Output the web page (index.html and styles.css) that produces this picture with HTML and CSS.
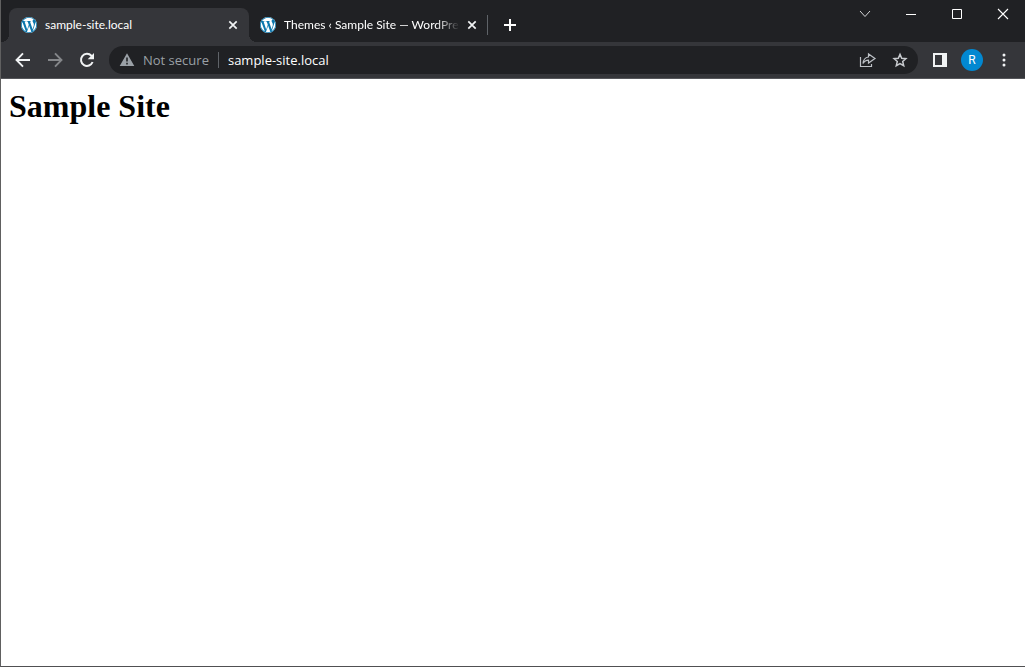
FILE: index.html
```html
<!DOCTYPE html>
<html lang="en">
<head>
<meta charset="utf-8">
<title>Sample Site</title>
<link rel="stylesheet" href="styles.css">
</head>
<body>
<svg class="defs" width="0" height="0" aria-hidden="true">
  <symbol id="wp" viewBox="0 0 24 24">
    <circle cx="12" cy="12" r="12" fill="#fff"/>
    <path fill="#0b77ad" d="M21.469 6.825c.84 1.537 1.318 3.3 1.318 5.175 0 3.979-2.156 7.456-5.363 9.325l3.295-9.527c.615-1.54.82-2.771.82-3.864 0-.405-.026-.78-.07-1.11m-7.981.105c.647-.03 1.232-.105 1.232-.105.582-.075.514-.93-.067-.899 0 0-1.755.135-2.88.135-1.064 0-2.85-.15-2.85-.15-.585-.03-.661.855-.075.885 0 0 .54.061 1.125.09l1.68 4.605-2.37 7.08L5.354 6.9c.649-.03 1.234-.1 1.234-.1.585-.075.516-.93-.065-.896 0 0-1.746.138-2.874.138-.2 0-.438-.008-.69-.015C4.911 3.15 8.235 1.215 12 1.215c2.809 0 5.365 1.072 7.286 2.833-.046-.003-.091-.009-.141-.009-1.06 0-1.812.923-1.812 1.914 0 .89.513 1.643 1.06 2.531.411.72.89 1.643.89 2.977 0 .915-.354 1.994-.821 3.479l-1.075 3.585-3.9-11.61.001.014zM12 22.784c-1.059 0-2.081-.153-3.048-.437l3.237-9.406 3.315 9.087c.024.053.05.101.078.149-1.12.393-2.325.609-3.582.609M1.211 12c0-1.564.336-3.05.935-4.39L7.29 21.709C3.694 19.96 1.212 16.271 1.211 12M12 0C5.385 0 0 5.385 0 12s5.385 12 12 12 12-5.385 12-12S18.615 0 12 0"/>
  </symbol>
  <symbol id="close" viewBox="0 0 16 16">
    <path d="M4.3 4.3l7.4 7.4M11.7 4.3l-7.4 7.4" fill="none" stroke="#f1f3f4" stroke-width="1.7"/>
  </symbol>
</svg>
<div class="window">
  <header class="tabstrip">
    <div class="tab tab-active">
      <svg class="favicon" aria-hidden="true"><use href="#wp"/></svg>
      <span class="tab-title">sample-site.local</span>
      <button class="tab-close" aria-label="Close tab"><svg width="16" height="16"><use href="#close"/></svg></button>
    </div>
    <div class="tab">
      <svg class="favicon" aria-hidden="true"><use href="#wp"/></svg>
      <span class="tab-title tab-title-fade">Themes ‹ Sample Site — WordPre</span>
      <button class="tab-close" aria-label="Close tab"><svg width="16" height="16"><use href="#close"/></svg></button>
    </div>
    <button class="new-tab" aria-label="New tab"><svg width="16" height="16" viewBox="0 0 16 16"><path d="M8 2v12M2 8h12" stroke="#fff" stroke-width="2"/></svg></button>
    <div class="caption">
      <button class="caption-button" aria-label="Search tabs"><svg width="12" height="12" viewBox="0 0 12 12"><path d="M1 3l5 5.500 5-5.500" fill="none" stroke="#d5d6d8"/></svg></button>
      <button class="caption-button" aria-label="Minimize"><svg width="12" height="12" viewBox="0 0 12 12"><path d="M1 6.500h10" stroke="#fff"/></svg></button>
      <button class="caption-button" aria-label="Maximize"><svg width="12" height="12" viewBox="0 0 12 12"><path d="M1.500 1.500h9v9h-9z" fill="none" stroke="#fff"/></svg></button>
      <button class="caption-button" aria-label="Close"><svg width="12" height="12" viewBox="0 0 12 12"><path d="M1 1l10 10M11 1L1 11" stroke="#fff" stroke-width="1.100"/></svg></button>
    </div>
  </header>
  <nav class="toolbar" aria-label="Navigation">
    <div class="nav-buttons">
      <button class="icon-button" aria-label="Back"><svg width="16" height="16" viewBox="0 0 16 16"><path d="M15 8H2M8 1.300L1.500 8 8 14.700" fill="none" stroke="#f1f3f4" stroke-width="1.900"/></svg></button>
      <button class="icon-button" aria-label="Forward"><svg width="16" height="16" viewBox="0 0 16 16"><path d="M1 8h13M8 1.300L14.500 8 8 14.700" fill="none" stroke="#85878a" stroke-width="1.900"/></svg></button>
      <button class="icon-button" aria-label="Reload"><svg width="16" height="16" viewBox="0 0 16 16"><path d="M13.600 10A6 6 0 1 1 12.400 3.800L14 5.400" fill="none" stroke="#f1f3f4" stroke-width="2"/><path d="M15 1v6.300H8.700z" fill="#f1f3f4"/></svg></button>
    </div>
    <div class="omnibox">
      <svg class="warning" width="16" height="16" viewBox="0 0 16 16" aria-hidden="true"><path fill="#9aa0a6" fill-rule="evenodd" d="M8 1.300L15.300 14H.7zM7.200 5.500v4h1.600v-4zM7.200 10.800v1.600h1.600v-1.600z"/></svg>
      <span class="security">Not secure</span>
      <input class="address" type="text" aria-label="Address" value="sample-site.local">
      <button class="icon-button" aria-label="Share"><svg width="18" height="16" viewBox="0 0 18 16"><path d="M1.500 5v9.500h11V12M9.500 5V2l6.500 4.500L9.500 11V8.200C7 8.200 5.300 9.200 4 11.500 4.300 8 6 5.500 9.500 5z" fill="none" stroke="#bdc1c6" stroke-width="1.200"/></svg></button>
      <button class="icon-button" aria-label="Bookmark"><svg width="16" height="16" viewBox="0 0 16 16"><path d="M8 2.400l1.700 3.900 4.200.4-3.200 2.800 1 4.200L8 11.500l-3.700 2.200 1-4.200-3.200-2.800 4.200-.4z" fill="none" stroke="#c8cbcf" stroke-width="1.500"/></svg></button>
    </div>
    <div class="tool-buttons">
      <button class="icon-button" aria-label="Side panel"><svg width="14" height="14" viewBox="0 0 14 14"><path fill="#f1f3f4" fill-rule="evenodd" d="M0 0h14v14H0zM2 2v10h7V2z"/></svg></button>
      <button class="avatar" aria-label="Profile">R</button>
      <button class="icon-button" aria-label="Menu"><svg width="4" height="14" viewBox="0 0 4 14"><g fill="#f1f3f4"><circle cx="2" cy="2" r="1.500"/><circle cx="2" cy="7" r="1.500"/><circle cx="2" cy="12" r="1.500"/></g></svg></button>
    </div>
  </nav>
  <main class="page">
    <h1 class="site-title">Sample Site</h1>
  </main>
</div>
</body>
</html>
```
FILE: styles.css
```css
* {
  box-sizing: border-box;
}

body {
  margin: 0;
  font-family: "Open Sans", "Noto Sans", sans-serif;
}

button {
  display: flex;
  align-items: center;
  justify-content: center;
  flex: none;
  padding: 0;
  border: 0;
  background: none;
  color: inherit;
}

svg {
  display: block;
  flex: none;
}

.defs {
  position: absolute;
}

.window {
  display: flex;
  flex-direction: column;
  min-height: 100vh;
  border-left: 1px solid #606060;
  border-bottom: 1px solid #505052;
  background: #fff;
}

.tabstrip {
  display: flex;
  height: 42px;
  padding-left: 8px;
  background: #202124;
  color: #fff;
}

.tab {
  position: relative;
  display: flex;
  flex: 0 1 240px;
  align-items: center;
  min-width: 0;
  margin-top: 8px;
  padding: 0 8px 0 11px;
}

.tab-active {
  padding-left: 12px;
  border-radius: 8px 8px 0 0;
  background: #35363a;
}

.tab-active::before,
.tab-active::after {
  content: "";
  position: absolute;
  bottom: 0;
  width: 8px;
  height: 8px;
}

.tab-active::before {
  right: 100%;
  background: radial-gradient(circle at 0 0, #202124 8px, #35363a 8px);
}

.tab-active::after {
  left: 100%;
  background: radial-gradient(circle at 100% 0, #202124 8px, #35363a 8px);
}

.tab + .tab::after {
  content: "";
  position: absolute;
  right: 1px;
  width: 1px;
  height: 20px;
  background: #5f6368;
}

.favicon {
  width: 16px;
  height: 16px;
}

.tab-title {
  flex: 1;
  min-width: 0;
  margin-left: 8px;
  overflow: hidden;
  font-family: Lato, "Open Sans", sans-serif;
  font-size: 12px;
  line-height: 16px;
  white-space: nowrap;
}

.tab-title-fade {
  mask-image: linear-gradient(to left, transparent, #000 24px);
}

.tab-close {
  width: 16px;
  height: 16px;
  margin-left: 4px;
}

.tab + .tab .tab-close {
  margin-right: 1px;
}

.new-tab {
  width: 28px;
  height: 28px;
  margin: 11px 0 0 7px;
}

.caption {
  display: flex;
  margin-left: auto;
}

.caption-button {
  width: 46px;
  height: 28px;
  padding-left: 2px;
}

.toolbar {
  display: flex;
  align-items: center;
  height: 37px;
  padding-right: 9px;
  border-bottom: 1px solid #55565a;
  background: #35363a;
}

.nav-buttons {
  display: flex;
  padding: 0 6px;
}

.icon-button {
  width: 32px;
  height: 28px;
}

.omnibox {
  display: flex;
  flex: 1;
  align-items: center;
  min-width: 0;
  height: 28px;
  padding: 0 2px 0 10px;
  border-radius: 14px;
  background: #202124;
  font-size: 13px;
  line-height: 16px;
}

.security {
  margin-left: 8px;
  padding-right: 9px;
  border-right: 1px solid #5f6368;
  color: #9aa0a6;
  white-space: nowrap;
}

.address {
  flex: 1;
  min-width: 0;
  padding: 0 0 0 9px;
  border: 0;
  outline: 0;
  background: none;
  color: #fff;
  font: inherit;
}

.tool-buttons {
  display: flex;
  align-items: center;
  padding-left: 6px;
}

.tool-buttons .icon-button:last-child {
  width: 24px;
  margin-left: 9px;
}

.avatar {
  width: 22px;
  height: 22px;
  margin-left: 5px;
  border-radius: 50%;
  background: #0288d1;
  color: #fff;
  font-family: Roboto, sans-serif;
  font-size: 12px;
}

.page {
  flex: 1;
  padding: 8px;
  color: #000;
  font-family: "Liberation Serif", serif;
}

.site-title {
  margin: 0;
  font-size: 32px;
  line-height: 38px;
}
```
